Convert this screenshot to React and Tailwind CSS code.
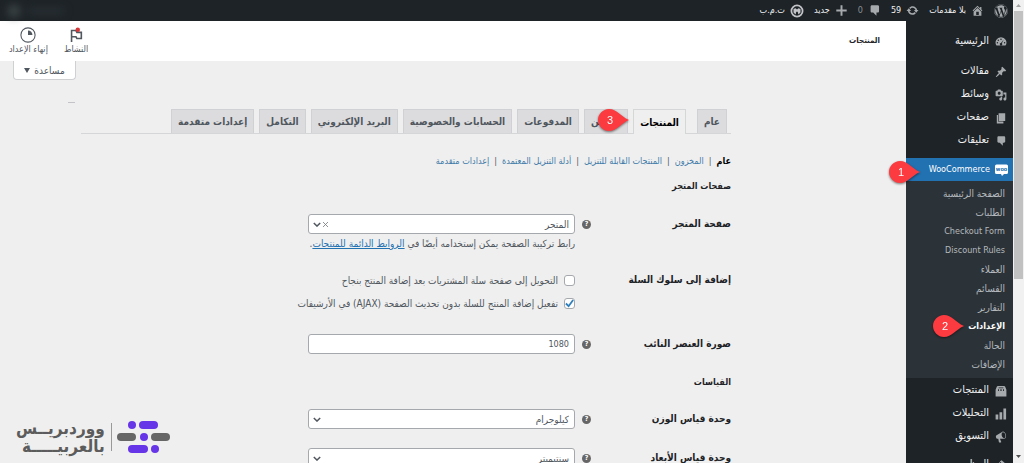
import { useState } from 'react'
import { FaWordpress } from 'react-icons/fa6'

const ICONS = {
  home: 'M16 8.5l1.53 1.53-1.06 1.06L10 4.6l-6.47 6.49-1.06-1.06L10 2.5l4 4v-2h2v4zm-6-2.46l6 5.99V18H4v-5.97zM12 17v-5H8v5h4z',
  update:
    'M10.2 3.28c3.53 0 6.43 2.61 6.92 6h2.08l-3.5 4-3.5-4h2.32c-.45-1.97-2.21-3.45-4.32-3.45-1.45 0-2.73.71-3.54 1.78L4.95 5.66C6.23 4.2 8.11 3.28 10.2 3.28zm-.4 13.44c-3.52 0-6.43-2.61-6.92-6H.8l3.5-4c1.17 1.33 2.33 2.67 3.5 4H5.48c.45 1.97 2.21 3.45 4.32 3.45 1.45 0 2.73-.71 3.54-1.78l1.71 1.95c-1.28 1.46-3.15 2.38-5.25 2.38z',
  comment: 'M15 2H6c-1.1 0-2 .9-2 2v7c0 1.1.9 2 2 2h2l5 5v-5h2c1.1 0 2-.9 2-2V4c0-1.1-.9-2-2-2z',
  plus: 'M8.500 2h3v6.500H18v3h-6.500V18h-3v-6.500H2v-3h6.500z',
  dashboard:
    'M10 2a9 9 0 0 0-7.500 14h15A9 9 0 0 0 10 2zm0 2a1.300 1.300 0 1 1 0 2.600A1.300 1.300 0 0 1 10 4zM5.500 6a1.200 1.200 0 1 1 0 2.400 1.200 1.200 0 0 1 0-2.400zM4 10a1.200 1.200 0 1 1 0 2.400A1.200 1.200 0 0 1 4 10zm12 0a1.200 1.200 0 1 1 0 2.400 1.200 1.200 0 0 1 0-2.400zm-1.500-4l-3 6.200a2 2 0 1 1-1.500-.7z',
  pin: 'M10.44 3.02l1.82-1.82 6.36 6.35-1.83 1.82c-1.05-.68-2.48-.57-3.41.36l-.75.75c-.92.93-1.04 2.35-.35 3.41l-1.83 1.82-2.41-2.41-2.8 2.79c-.42.42-3.38 2.71-3.8 2.29s1.86-3.39 2.28-3.81l2.79-2.79L4.1 9.36l1.83-1.82c1.05.69 2.48.57 3.4-.36l.75-.75c.93-.92 1.05-2.35.36-3.41z',
  media:
    'M13 11V4c0-.55-.45-1-1-1h-1.67L9 1H5L3.67 3H2c-.55 0-1 .45-1 1v7c0 .55.45 1 1 1h10c.55 0 1-.45 1-1zM7 4.5c1.38 0 2.5 1.12 2.5 2.5S8.38 9.5 7 9.5 4.5 8.38 4.5 7 5.62 4.5 7 4.5zM14 6h5v10.5c0 1.38-1.12 2.5-2.5 2.5S14 17.88 14 16.5s1.12-2.5 2.5-2.5c.17 0 .34.02.5.05V9h-3V6zm-4 8.05V13h2v3.5c0 1.38-1.12 2.5-2.5 2.5S7 17.88 7 16.5 8.12 14 9.5 14c.17 0 .34.02.5.05z',
  pages: 'M6 15V2h11v13H6zm-1 1h9v3H3V5h2v11z',
  bag: 'M1 8l2-5q.5-1.500 2-1.500h10q1.500 0 2 1.500l2 5v11H1zm4-1v3h1.500V7zm4 0v3h2V7zm4.500 0v3H15V7zM6 4v1.500h8V4z',
  bars: 'M1 11h4.500v8H1zM7.500 7H12v12H7.500zM14 1h4.500v18H14z',
  megaphone:
    'M18.15 5.94c.46 1.62.38 3.22-.02 4.48-.42 1.28-1.26 2.18-2.3 2.48-.16.06-.26.06-.4.06-.06.02-.12.02-.18.02-.06.02-.14.02-.22.02h-6.8l2.22 5.5c.02.14-.06.26-.14.34-.08.1-.24.16-.34.16H6.95c-.1 0-.26-.06-.34-.16-.08-.08-.16-.2-.14-.34l-1-5.5H4.25l-.02-.02c-.5.06-1.08-.18-1.54-.62s-.88-1.08-1.06-1.88c-.24-.8-.2-1.56-.02-2.2.18-.62.58-1.08 1.06-1.3l.02-.02 9-5.4c.1-.06.18-.1.24-.16.06-.04.14-.08.24-.12.16-.08.28-.12.5-.18 1.04-.3 2.24.1 3.22.98s1.84 2.24 2.26 3.86zm-2.58 5.98h-.02c.4-.1.74-.34 1.04-.7.58-.7.86-1.76.86-3.04 0-.64-.1-1.3-.28-1.98-.34-1.36-1.02-2.5-1.78-3.24s-1.68-1.1-2.46-.88c-.82.22-1.4.96-1.7 2-.32 1.04-.28 2.36.06 3.72.38 1.36 1 2.5 1.8 3.24.78.74 1.62 1.1 2.48.88z',
  brush: 'M11 2l8 7-3 3-8-8zM7 5l8 8-3 2-2-1-5 5-3-3 5-5-1-3z',
}

const TOP_MENU = [
  { label: 'مقالات', icon: 'pin' },
  { label: 'وسائط', icon: 'media' },
  { label: 'صفحات', icon: 'pages' },
  { label: 'تعليقات', icon: 'comment' },
]

const SUBMENU = [
  { label: 'الصفحة الرئيسية' },
  { label: 'الطلبات' },
  { label: 'Checkout Form', latin: true },
  { label: 'Discount Rules', latin: true },
  { label: 'العملاء' },
  { label: 'القسائم' },
  { label: 'التقارير' },
  { label: 'الإعدادات', current: true },
  { label: 'الحالة' },
  { label: 'الإضافات' },
]

const BOTTOM_MENU = [
  { label: 'المنتجات', icon: 'bag' },
  { label: 'التحليلات', icon: 'bars' },
  { label: 'التسويق', icon: 'megaphone' },
]

const TABS = [
  'الشحن',
  'المدفوعات',
  'الحسابات والخصوصية',
  'البريد الإلكتروني',
  'التكامل',
  'إعدادات متقدمة',
]

const SECTIONS = ['المخزون', 'المنتجات القابلة للتنزيل', 'أدلة التنزيل المعتمدة', 'إعدادات متقدمة']

export default function App() {
  return (
    <div
      dir="rtl"
      className="relative flex h-screen overflow-hidden bg-[#efefef] font-['DejaVu_Sans_Condensed','DejaVu_Sans',sans-serif] text-[10px] text-[#50575e]"
    >
      <Scrollbar />
      <div className="flex min-w-0 flex-1 flex-col">
        <AdminBar />
        <div className="flex min-h-0 flex-1">
          <Sidebar />
          <main className="min-w-0 flex-1">
            <Header />
            <Settings />
          </main>
        </div>
      </div>
      <Brand />
    </div>
  )
}

function Icon({ name, className = 'size-3' }) {
  return (
    <svg viewBox="0 0 20 20" fill="currentColor" fillRule="evenodd" className={'shrink-0 ' + className} aria-hidden="true">
      <path d={ICONS[name]} />
    </svg>
  )
}

function Scrollbar() {
  return (
    <div className="flex w-[11px] shrink-0 flex-col items-center bg-[#f1f1f1]" aria-hidden="true">
      <div className="flex h-[11px] items-center">
        <svg width="5" height="3" viewBox="0 0 5 3" fill="#a3a3a3"><path d="M0 3L2.500 0L5 3z" /></svg>
      </div>
      <div className="h-[268px] w-[9px] bg-[#c1c1c1]" />
      <div className="mt-auto flex h-[13px] items-center">
        <svg width="5" height="3" viewBox="0 0 5 3" fill="#505050"><path d="M0 0L2.500 3L5 0z" /></svg>
      </div>
    </div>
  )
}

function AdminBar() {
  return (
    <header className="flex h-[21px] shrink-0 items-center gap-[10px] bg-[#1d2327] pr-[5px] text-[9px] text-[#f0f0f1]">
      <a href="#about" aria-label="WordPress" className="text-[#a7aaad]">
        <FaWordpress className="size-[14px]" />
      </a>
      <BarLink icon="home">بلا مقدمات</BarLink>
      <BarLink icon="update">59</BarLink>
      <BarLink icon="comment"><span className="text-[#8c8f94]">0</span></BarLink>
      <BarLink icon="plus">جديد</BarLink>
      <a href="#tmb" className="flex items-center gap-[5px]">
        <svg viewBox="0 0 20 20" className="size-[14px] text-[#c3c4c7]" aria-hidden="true">
          <circle cx="10" cy="10" r="8" fill="none" stroke="currentColor" strokeWidth="2.500" />
          <path d="M5 7l3-1 2 2 2-2 3 1v5l-3 3-1-4h-2l-1 4-3-3z" fill="currentColor" />
        </svg>
        ت.م.ب
      </a>
      <div className="mr-auto flex items-center gap-2 pl-2 blur-xs" aria-hidden="true">
        <span className="h-1 w-9 bg-[#30373c]" />
        <span className="size-3 rounded-full bg-[#42494a]" />
      </div>
    </header>
  )
}

function BarLink({ icon, children }) {
  return (
    <a href={'#' + icon} className="flex items-center gap-[5px]">
      <Icon name={icon} className="size-[13px] text-[#a7aaad]" />
      {children}
    </a>
  )
}

function MenuItem({ label, icon }) {
  return (
    <li>
      <a href={'#' + icon} className="flex h-[23px] items-center gap-[6px] pr-[6px] text-[11px] text-[#f0f0f1]">
        <Icon name={icon} className="size-3 text-[#a7aaad]" />
        {label}
      </a>
    </li>
  )
}

function Sidebar() {
  return (
    <nav className="relative z-10 w-[107px] shrink-0 bg-[#1d2327] pt-[9px]">
      <ul>
        <MenuItem label="الرئيسية" icon="dashboard" />
      </ul>
      <ul className="mt-[7px]">
        {TOP_MENU.map((m) => (
          <MenuItem key={m.icon} {...m} />
        ))}
      </ul>
      <div className="relative mt-[6px]">
        <a href="#woocommerce" className="flex h-[23px] items-center gap-[5px] bg-[#2271b1] pr-[5px] text-[9px] text-white">
          <svg viewBox="0 0 26 24" className="h-3 w-[13px] shrink-0" aria-hidden="true">
            <path d="M3 1h20q3 0 3 3v13q0 3-3 3h-5l-4 4-2-4H3q-3 0-3-3V4q0-3 3-3z" fill="#fff" />
            <text x="13" y="14" fontSize="11" fontWeight="700" textAnchor="middle" direction="ltr" fill="#2271b1">woo</text>
          </svg>
          WooCommerce
        </a>
        <Marker n="1" className="top-[2px] -left-[18px]" />
      </div>
      <ul className="bg-[#2c3338] pt-[3px] pb-1">
        {SUBMENU.map(({ label, latin, current }) => (
          <li key={label} className="relative">
            <a
              href="#submenu"
              className={
                'flex h-[19px] items-center pr-2 ' +
                (current ? 'font-bold text-white' : 'text-[#b4b9be]') +
                (latin || current ? ' text-[9px]' : '')
              }
            >
              {label}
            </a>
            {current ? <Marker n="2" className="-top-[3px] left-[26px]" /> : null}
          </li>
        ))}
      </ul>
      <ul className="pt-px">
        {BOTTOM_MENU.map((m) => (
          <MenuItem key={m.icon} {...m} />
        ))}
      </ul>
      <ul className="mt-[5px]">
        <MenuItem label="المظهر" icon="brush" />
      </ul>
    </nav>
  )
}

// Red numbered pointer, tip facing right
function Marker({ n, className }) {
  return (
    <svg
      width="34"
      height="24"
      viewBox="0 0 34 24"
      className={'absolute z-20 drop-shadow-[0_1px_1px_rgba(0,0,0,0.5)] ' + className}
      aria-hidden="true"
    >
      <path d="M12 1C6 1 1 6 1 12s5 11 11 11c8 0 11-7 20-11C23 8 20 1 12 1z" fill="#fb3b40" />
      <text x="13" y="16" fontSize="11" textAnchor="middle" direction="ltr" fill="#fff" fontFamily="Liberation Sans">{n}</text>
    </svg>
  )
}

function Header() {
  return (
    <div className="flex h-10 items-center bg-white pr-[26px] pl-[9px]">
      <h1 className="text-[8px] font-bold text-[#1d2327]">المنتجات</h1>
      <div className="mr-auto flex gap-4 text-[9px]">
        <button type="button" className="flex flex-col items-center">
          <svg viewBox="0 0 18 18" className="size-4" fill="none" aria-hidden="true">
            <path d="M4 17V4h5l1 2h5v7h-5l-1-2H4" stroke="#50575e" strokeWidth="1.800" />
            <circle cx="11" cy="3" r="2.500" fill="#d63638" />
          </svg>
          <span className="leading-3">النشاط</span>
        </button>
        <button type="button" className="flex flex-col items-center">
          <svg viewBox="0 0 18 18" className="size-4" fill="none" aria-hidden="true">
            <circle cx="9" cy="9" r="8" stroke="#50575e" strokeWidth="1.200" />
            <path d="M9 4a5 5 0 0 1 5 5H9z" fill="#50575e" />
          </svg>
          <span className="leading-3">إنهاء الإعداد</span>
        </button>
      </div>
    </div>
  )
}

function Tab({ children, active }) {
  return (
    <a
      href="#tab"
      className={
        'relative flex items-center border border-b-0 px-[6px] font-bold whitespace-nowrap ' +
        (active
          ? '-mb-px h-[25px] border-[#d5d6d8] bg-[#efefef] text-black'
          : 'h-6 border-[#d0d1d4] bg-[#dcdcde] text-[#50575e]')
      }
    >
      {children}
    </a>
  )
}

function Settings() {
  const [redirect, setRedirect] = useState(false)
  const [ajax, setAjax] = useState(true)
  const [image, setImage] = useState('1080')

  return (
    <div className="pr-[175px]">
      <div className="flex h-[19px] justify-end pl-[13px]">
        <button type="button" className="flex w-[63px] items-center justify-center gap-1 rounded-b-sm border border-t-0 border-[#cfd0d2] bg-white">
          مساعدة
          <svg width="6" height="5" viewBox="0 0 6 5" fill="currentColor" aria-hidden="true"><path d="M0 0h6L3 5z" /></svg>
        </button>
      </div>
      <div className="mt-[22px] flex justify-end pl-[68px]">
        <span className="h-px w-[7px] bg-[#c3c4c7]" />
      </div>

      <nav className="mt-[6px] ml-[81px] flex items-end gap-[5px] border-b border-[#d5d6d8] pr-1">
        <Tab>عام</Tab>
        <div className="relative mr-[6px]">
          <Tab active>المنتجات</Tab>
          <Marker n="3" className="-top-px -left-[36px]" />
        </div>
        {TABS.map((t) => (
          <Tab key={t}>{t}</Tab>
        ))}
      </nav>

      <ul className="mt-[19px] flex items-center text-[9px] leading-4">
        <li><a href="#general" className="font-bold text-black">عام</a></li>
        {SECTIONS.map((s) => (
          <li key={s}>
            <span className="mx-[5px]">|</span>
            <a href="#section" className="text-[#3f7ba9]">{s}</a>
          </li>
        ))}
      </ul>

      <h2 className="mt-[9px] text-[9px] leading-4 font-bold text-[#1d2327]">صفحات المتجر</h2>

      <Row label="صفحة المتجر" htmlFor="shop-page" help className="mt-5">
        <Select id="shop-page" value="المتجر" clearable />
        <p className="mt-[2px] leading-4 whitespace-nowrap">
          رابط تركيبة الصفحة يمكن إستخدامه أيضًا في{' '}
          <a href="#permalinks" className="text-[#2271b1] underline">الروابط الدائمة للمنتجات</a>.
        </p>
      </Row>

      <Row label="إضافة إلى سلوك السلة" className="mt-[18px]">
        <Check checked={redirect} onChange={setRedirect}>
          التحويل إلى صفحة سلة المشتريات بعد إضافة المنتج بنجاح
        </Check>
        <div className="h-[3px]" />
        <Check checked={ajax} onChange={setAjax}>
          تفعيل إضافة المنتج للسلة بدون تحديث الصفحة (AJAX) في الأرشيفات
        </Check>
      </Row>

      <Row label="صورة العنصر النائب" htmlFor="placeholder" help className="mt-[21px]">
        <input
          id="placeholder"
          value={image}
          onChange={(e) => setImage(e.target.value)}
          className="h-5 w-full rounded-[3px] border border-[#a5a8ac] bg-white px-[5px] text-[9px]"
        />
      </Row>

      <h2 className="mt-5 text-[9px] leading-4 font-bold text-[#1d2327]">القياسات</h2>

      <Row label="وحدة قياس الوزن" htmlFor="weight" help className="mt-[19px]">
        <Select id="weight" value="كيلوجرام" />
      </Row>
      <Row label="وحدة قياس الأبعاد" htmlFor="dimension" help className="mt-[19px]">
        <Select id="dimension" value="سنتيميتر" />
      </Row>
    </div>
  )
}

function Row({ label, htmlFor, help, className, children }) {
  const Label = htmlFor ? 'label' : 'span'
  return (
    <div className={'flex ' + className}>
      <Label htmlFor={htmlFor} className="w-[140px] shrink-0 leading-5 font-bold text-[#1d2327]">
        {label}
      </Label>
      <div className="flex h-5 w-4 shrink-0 items-center">
        {help ? (
          <span className="flex size-[9px] items-center justify-center rounded-full bg-[#666] text-[7px] font-bold text-white">?</span>
        ) : null}
      </div>
      <div className="w-[267px]">{children}</div>
    </div>
  )
}

function Select({ id, value, clearable }) {
  return (
    <div className="relative">
      <select id={id} className="block h-5 w-full appearance-none rounded-[3px] border border-[#a5a8ac] bg-white px-[5px]">
        <option>{value}</option>
      </select>
      <svg viewBox="0 0 10 6" className="pointer-events-none absolute top-2 left-[5px] h-[5px] w-2" fill="none" aria-hidden="true">
        <path d="M1 1l4 4 4-4" stroke="#50575e" strokeWidth="1.800" />
      </svg>
      {clearable ? (
        <button type="button" aria-label="إزالة" className="absolute inset-y-0 left-[15px] flex items-center">
          <svg width="5" height="5" viewBox="0 0 6 6" aria-hidden="true"><path d="M0 0l6 6M6 0L0 6" stroke="#787c82" /></svg>
        </button>
      ) : null}
    </div>
  )
}

function Check({ checked, onChange, children }) {
  return (
    <label className="flex h-5 items-center gap-[6px] whitespace-nowrap">
      <span className="relative flex">
        <input
          type="checkbox"
          checked={checked}
          onChange={(e) => onChange(e.target.checked)}
          className="size-[11px] appearance-none rounded-[3px] border border-[#a5a8ac] bg-white"
        />
        {checked ? (
          <svg viewBox="0 0 10 10" className="pointer-events-none absolute top-px left-px size-[9px]" fill="none" aria-hidden="true">
            <path d="M1 5l3 3 5-7" stroke="#2f7fbd" strokeWidth="2" />
          </svg>
        ) : null}
      </span>
      {children}
    </label>
  )
}

function Brand() {
  return (
    <div className="absolute bottom-2 left-4 flex items-center gap-[5px]">
      <svg viewBox="0 0 54 32" className="h-8 w-[54px]" aria-hidden="true">
        <g fill="#6635e8">
          <circle cx="15" cy="4" r="4" />
          <rect x="22" width="19" height="8" rx="4" />
          <circle cx="27" cy="16" r="4" />
          <rect x="11" y="24" width="20" height="8" rx="4" />
          <circle cx="38" cy="28" r="4" />
        </g>
        <rect y="12" width="19" height="8" rx="4" fill="#666" />
        <rect x="34" y="12" width="19" height="8" rx="4" fill="#666" />
      </svg>
      <span className="h-7 w-px bg-[#999]" />
      <div className="pr-px text-[17px] leading-[18px] font-bold text-[#5c5c5c]">
        <div>ووردبريــس</div>
        <div>بالعربيـــــة</div>
      </div>
    </div>
  )
}
